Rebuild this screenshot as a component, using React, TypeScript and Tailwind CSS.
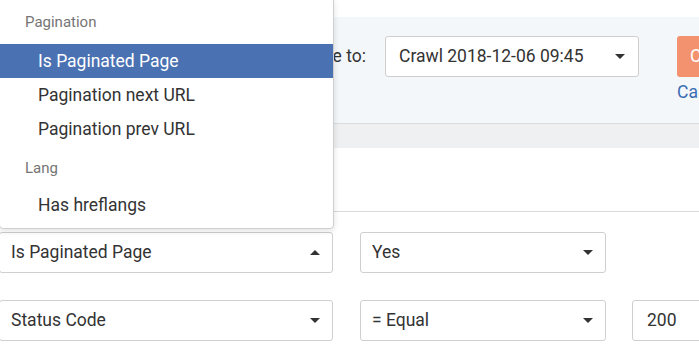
import React from "react";

function Caret({ up = false }: { up?: boolean }) {
  return (
    <svg width="10" height="5" viewBox="0 0 10 5" className="shrink-0">
      {up ? <path d="M0 5 L5 0 L10 5 Z" fill="#333" /> : <path d="M0 0 L10 0 L5 5 Z" fill="#333" />}
    </svg>
  );
}

function Select({ label, up = false, className = "" }: { label: string; up?: boolean; className?: string }) {
  return (
    <div
      className={`shrink-0 h-[41px] bg-white border border-[#cfcfcf] rounded-[3px] flex items-center justify-between pl-[11px] pr-[12px] text-[17.5px] text-[#333] ${className}`}
    >
      <span>{label}</span>
      <Caret up={up} />
    </div>
  );
}

export default function App() {
  return (
    <div className="relative w-[699px] h-[353px] overflow-hidden bg-white" style={{ fontFamily: "Roboto, 'Liberation Sans', sans-serif" }}>
      <div className="h-[17px]" />
      <div className="h-[107px] bg-[#f4f7fa] border-b border-[#d9dbdd] flex items-start pt-[19px]">
        <div className="shrink-0 w-[366px] text-right text-[17.5px] leading-[41px] text-[#333]">Compare to:</div>
        <div className="shrink-0 ml-[19px] w-[254px] h-[41px] bg-white border border-[#cfcfcf] rounded-[3px] flex items-center justify-between pl-[13px] pr-[13px] text-[17.5px] text-[#333]">
          <span>Crawl 2018-12-06 09:45</span>
          <Caret />
        </div>
        <div className="shrink-0 ml-[38px] flex flex-col">
          <div className="w-[120px] h-[41px] bg-[#f3926f] rounded-[3px] flex items-center pl-[13px] text-[17.5px] text-white">Compare</div>
          <div className="mt-[5px] text-[17.5px] leading-[20px] text-[#3a6cb4]">Cancel</div>
        </div>
      </div>
      <div className="h-[24px] bg-[#eff0f2]" />
      <div className="h-[63px]" />
      <div className="border-t border-[#d9d9d9]" />
      <div className="pt-[20px] flex flex-col gap-[27px]">
        <div className="flex items-center">
          <Select label="Is Paginated Page" up className="w-[334px] -ml-px" />
          <Select label="Yes" className="ml-[27px] w-[246px]" />
        </div>
        <div className="flex items-center">
          <Select label="Status Code" className="w-[334px] -ml-px" />
          <Select label="= Equal" className="ml-[27px] w-[246px]" />
          <div className="shrink-0 ml-[26px] w-[120px] h-[41px] bg-white border border-[#cfcfcf] rounded-[3px] flex items-center pl-[14px] text-[17.5px] text-[#333]">200</div>
        </div>
      </div>

      <div className="absolute left-[-1px] top-[-1px] w-[335px] bg-white border border-[#cfcfcf] rounded-b-[4px] shadow-[0_2px_6px_rgba(0,0,0,0.12)] flex flex-col pb-[6px]">
        <div className="h-[44px] flex items-center pl-[25px] pt-[1px] text-[15px] text-[#757575]">Pagination</div>
        <div className="h-[34px] flex items-center pl-[38px] bg-[#4a72b3] text-white text-[17.5px]">Is Paginated Page</div>
        <div className="h-[34px] flex items-center pl-[38px] text-[#333] text-[17.5px]">Pagination next URL</div>
        <div className="h-[34px] flex items-center pl-[38px] text-[#333] text-[17.5px]">Pagination prev URL</div>
        <div className="h-[42px] flex items-center pl-[25px] pt-[2px] text-[15px] text-[#757575]">Lang</div>
        <div className="h-[34px] flex items-center pl-[38px] text-[#333] text-[17.5px]">Has hreflangs</div>
      </div>
    </div>
  );
}
